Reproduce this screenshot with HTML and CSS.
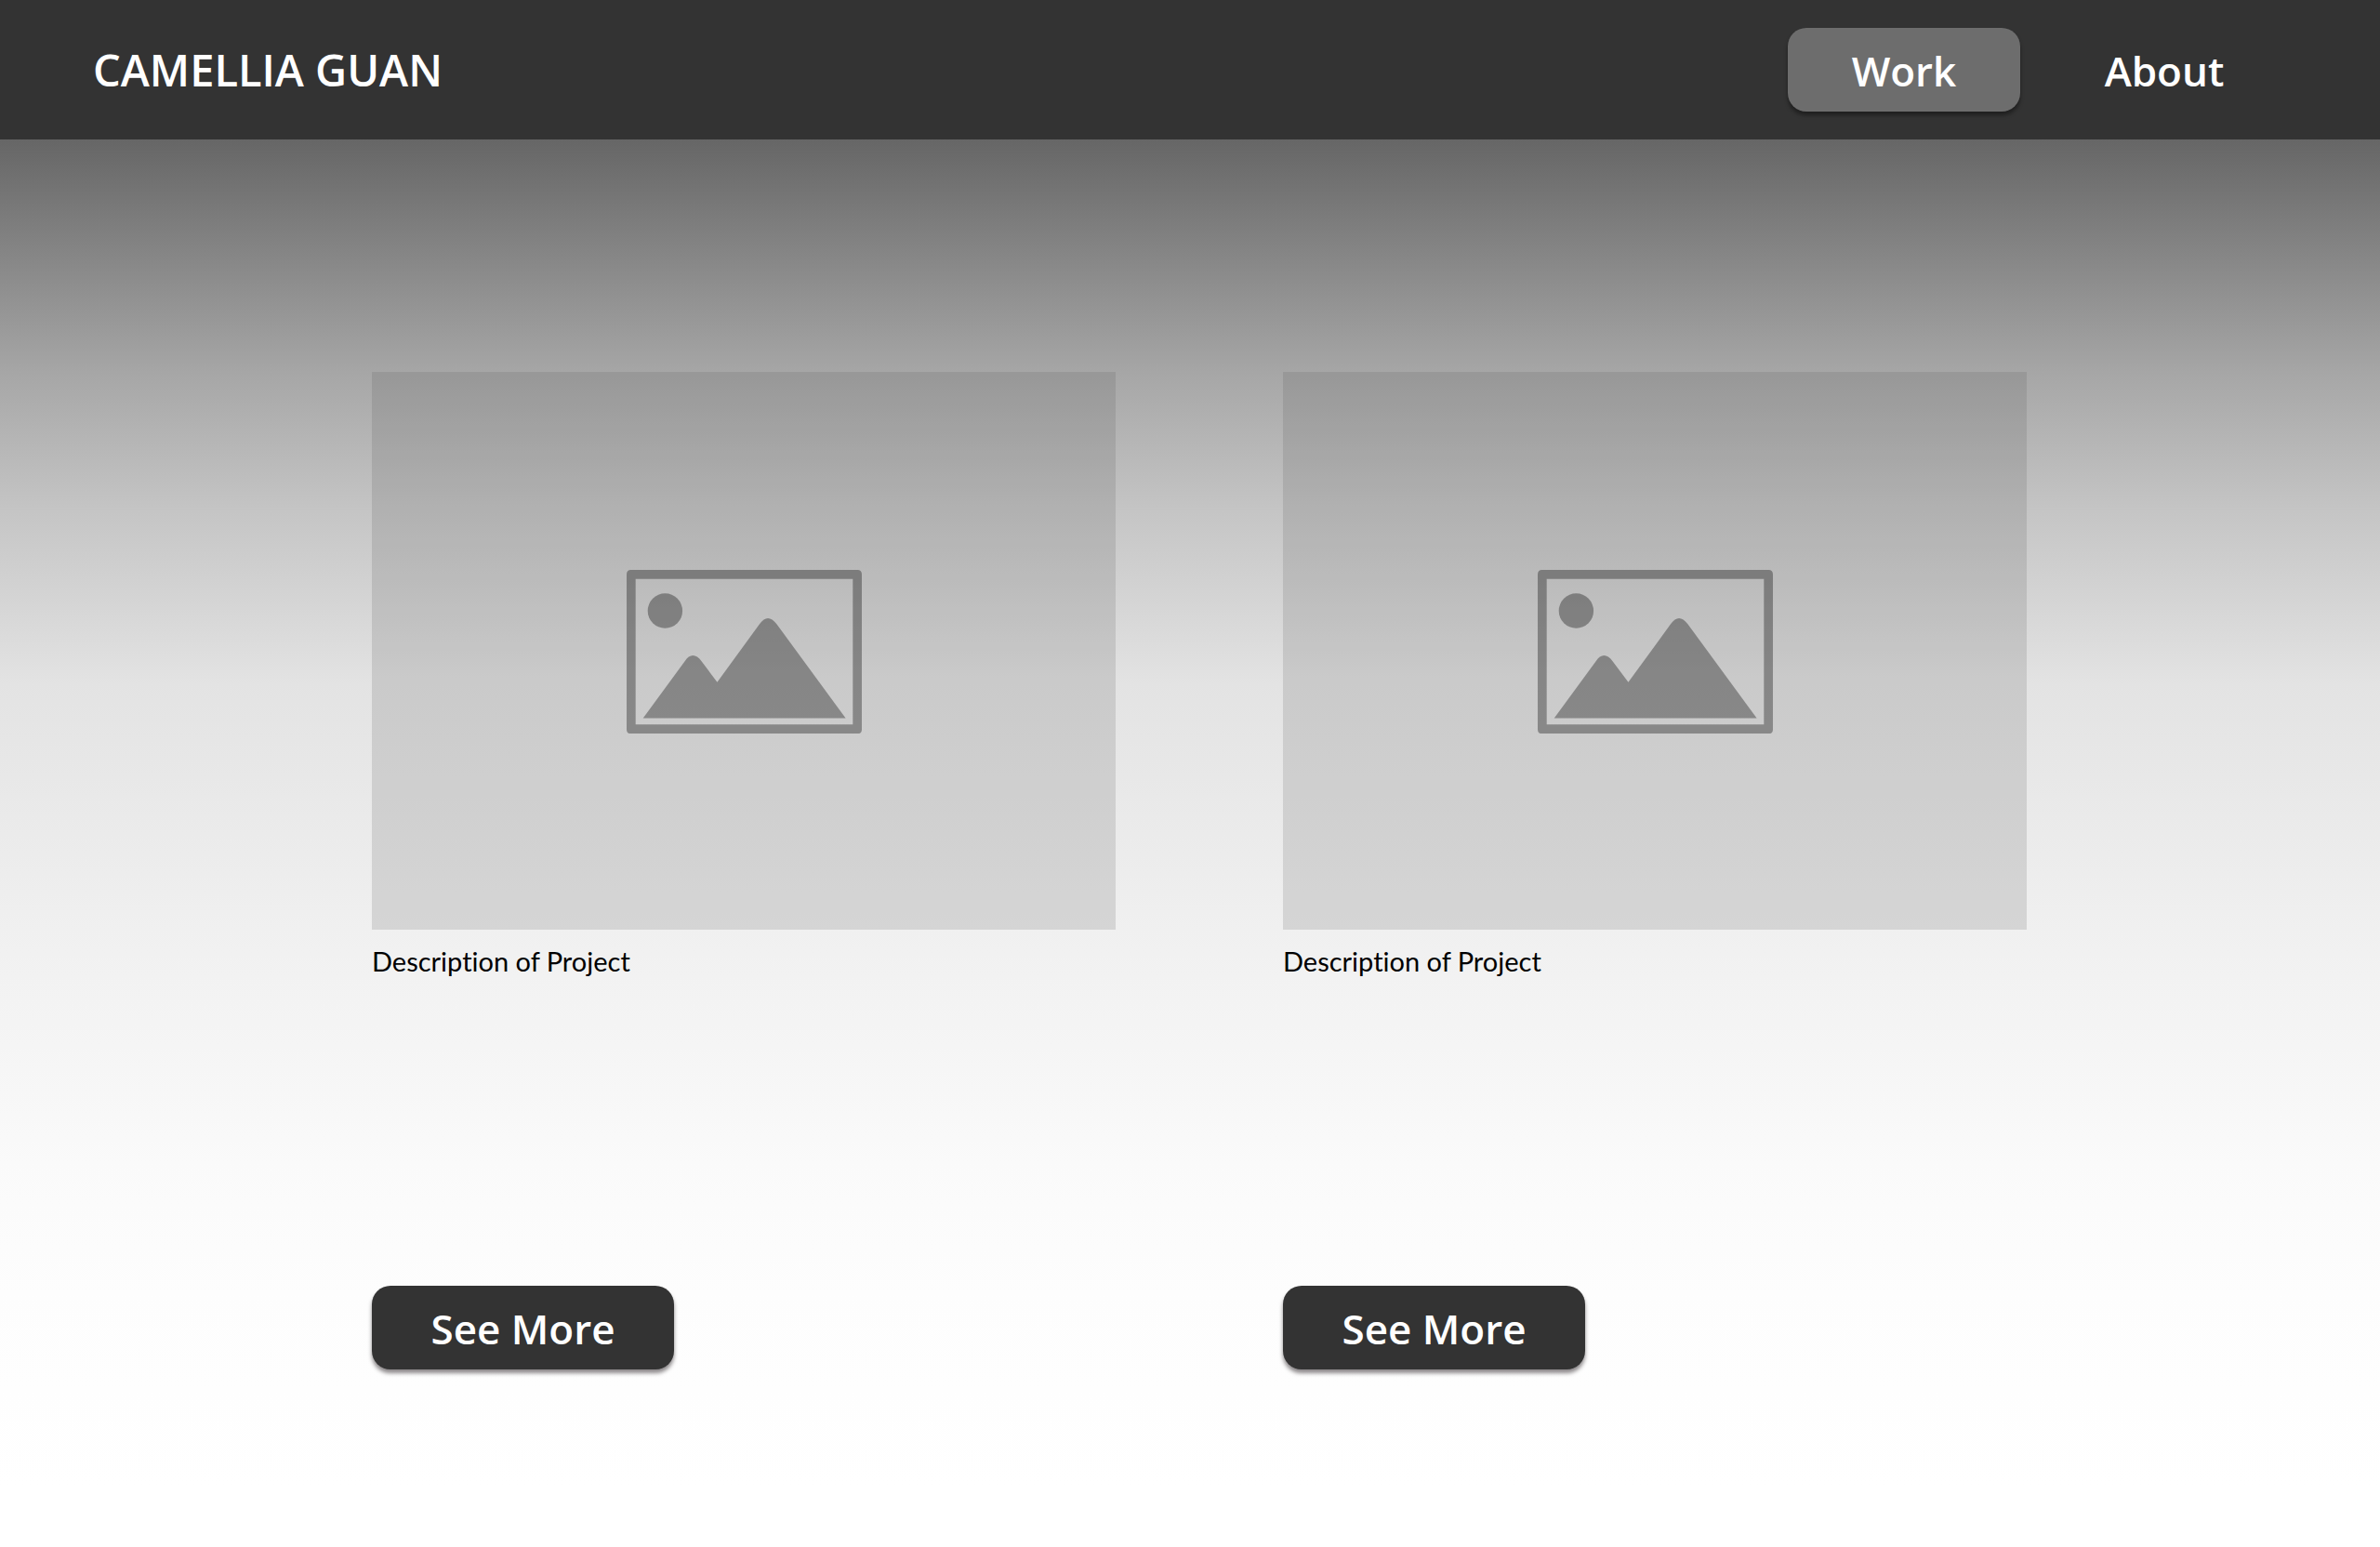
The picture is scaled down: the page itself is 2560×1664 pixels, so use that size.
FILE: index.html
```html
<!DOCTYPE html>
<html lang="en">
<head>
<meta charset="utf-8">
<meta name="viewport" content="width=device-width, initial-scale=1">
<title>Camellia Guan</title>
<link rel="stylesheet" href="styles.css">
</head>
<body>
<header class="header">
  <a class="brand" href="#">CAMELLIA GUAN</a>
  <nav class="nav">
    <a class="nav-link active" href="#work">Work</a>
    <a class="nav-link" href="#about">About</a>
  </nav>
</header>
<main class="projects" id="work">
  <article class="project">
    <div class="thumb">
      <svg class="thumb-icon" viewBox="0 0 758 528" aria-hidden="true">
        <path fill-rule="evenodd" d="M14 0H744Q758 0 758 14V514Q758 528 744 528H14Q0 528 0 514V14Q0 0 14 0ZM29 29V498H729V29Z"/>
        <circle cx="124" cy="132" r="56"/>
        <path d="M53 478L187 295Q213 257 242 295L292 362L429 174Q455 138 483 174L706 478Z"/>
      </svg>
    </div>
    <p class="description">Description of Project</p>
    <button class="more" type="button">See More</button>
  </article>
  <article class="project">
    <div class="thumb">
      <svg class="thumb-icon" viewBox="0 0 758 528" aria-hidden="true">
        <path fill-rule="evenodd" d="M14 0H744Q758 0 758 14V514Q758 528 744 528H14Q0 528 0 514V14Q0 0 14 0ZM29 29V498H729V29Z"/>
        <circle cx="124" cy="132" r="56"/>
        <path d="M53 478L187 295Q213 257 242 295L292 362L429 174Q455 138 483 174L706 478Z"/>
      </svg>
    </div>
    <p class="description">Description of Project</p>
    <button class="more" type="button">See More</button>
  </article>
</main>
</body>
</html>
```
FILE: styles.css
```css
* {
  box-sizing: border-box;
}

body {
  margin: 0;
  min-height: 100vh;
  background: linear-gradient(#666 150px, #a6a6a6 400px, #c5c5c5 550px, #e3e3e3 735px, #f0f0f0 1000px, #fafafa 1250px, #fdfdfd 1390px, #fff 1600px) #fff;
  font-family: Lato, "Liberation Sans", sans-serif;
  color: #000;
}

.header {
  display: flex;
  align-items: center;
  justify-content: space-between;
  min-height: 150px;
  padding: 0 107px 0 100px;
  background: #333;
}

.brand,
.nav-link,
.more {
  font-family: "Open Sans", sans-serif;
  font-size: 44px;
  font-weight: 600;
  line-height: 58px;
  color: #fff;
  text-decoration: none;
}

.brand {
  font-size: 47px;
}

.nav {
  display: flex;
  gap: 30px;
}

.nav-link {
  width: 250px;
  padding: 17px 0 15px;
  border-radius: 20px;
  text-align: center;
}

.nav-link.active {
  background: #6d6d6d;
  box-shadow: 0 4px 4px rgba(0, 0, 0, 0.4);
}

.projects {
  display: grid;
  grid-template-columns: 1fr 1fr;
  gap: 180px;
  padding: 250px 380px 190px 400px;
}

.project {
  display: flex;
  flex-direction: column;
  align-items: flex-start;
}

.thumb {
  display: flex;
  align-items: center;
  justify-content: center;
  width: 100%;
  padding-top: 2px;
  aspect-ratio: 4 / 3;
  background: rgba(85, 85, 85, 0.17);
}

.thumb-icon {
  width: 253px;
  fill: rgba(0, 0, 0, 0.335);
}

.description {
  min-height: 333px;
  margin: 0;
  padding-top: 14px;
  font-size: 29px;
  font-variant-ligatures: none;
  line-height: 40px;
}

.more {
  width: 325px;
  margin-top: 50px;
  padding: 17px 0 15px;
  border: 0;
  border-radius: 20px;
  background: #333;
  box-shadow: 0 4px 4px rgba(27, 20, 24, 0.5);
  cursor: pointer;
}
```
